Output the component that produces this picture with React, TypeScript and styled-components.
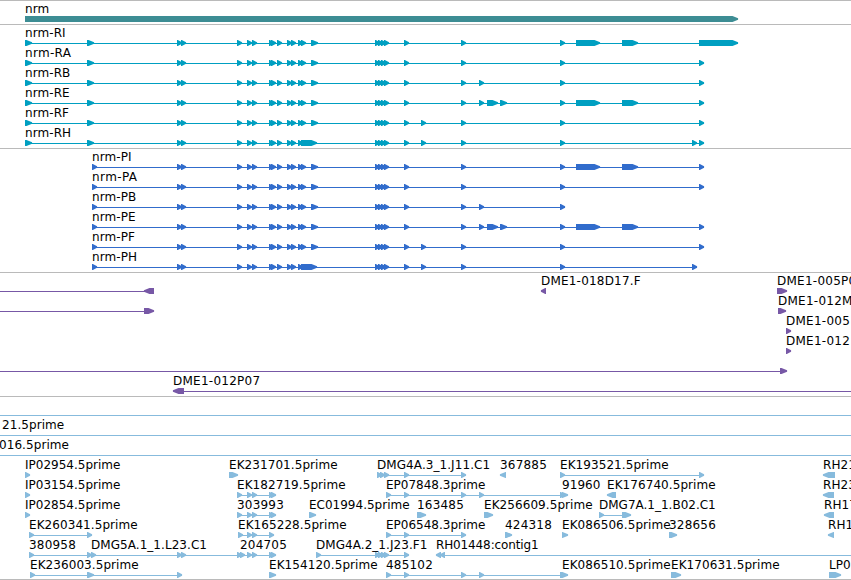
import styled, { createGlobalStyle } from 'styled-components';

type Span = [number, number];

interface Feature {
  label?: string;
  x?: number;
  spacing?: number;
  spans?: Span[];
  line?: Span;
  reverse?: boolean;
}

interface TrackData {
  color: string;
  lanes: Feature[][];
}

const HEAD = 5;

// most exons are only as wide as their arrow head
const small = (...starts: number[]): Span[] => starts.map((s) => [s, s + HEAD]);

const common: Span[] = [
  ...small(177, 181, 237, 247, 252, 269, 271, 277, 287, 291, 298),
  ...small(375, 378, 381, 384, 404, 461, 560),
];
const standard: Span[] = [...common, ...small(301), [311, 318]];
const fused: Span[] = [...common, [301, 317], ...small(421)];
const tail: Span[] = [[576, 600], [622, 638]];
const alternate: Span[] = [...small(479), [487, 498], [500, 507]];

const utr: Span[] = [[25, 32], [87, 94]];
const cds: Span[] = small(92);

const transcripts: Feature[][] = [
  [{ label: 'nrm-RI', x: 25, spans: [...utr, ...standard, ...tail, [699, 738]] }],
  [{ label: 'nrm-RA', x: 25, spacing: 0.3, spans: [...utr, ...standard, ...small(699)] }],
  [{ label: 'nrm-RB', x: 25, spans: [...utr, ...standard, ...small(479, 699)] }],
  [{ label: 'nrm-RE', x: 25, spans: [...utr, ...standard, ...alternate, ...tail, ...small(699)] }],
  [{ label: 'nrm-RF', x: 25, spans: [...utr, ...standard, ...small(421, 699)] }],
  [{ label: 'nrm-RH', x: 25, spans: [...utr, ...fused, ...small(692, 699)] }],
];

const proteins: Feature[][] = [
  [{ label: 'nrm-PI', x: 92, spans: [...cds, ...standard, ...tail, ...small(699)] }],
  [{ label: 'nrm-PA', x: 92, spacing: 0.4, spans: [...cds, ...standard, ...small(699)] }],
  [{ label: 'nrm-PB', x: 92, spans: [...cds, ...standard, ...small(479)] }],
  [{ label: 'nrm-PE', x: 92, spans: [...cds, ...standard, ...alternate, ...tail, ...small(699)] }],
  [{ label: 'nrm-PF', x: 92, spans: [...cds, ...standard, ...small(421, 699)] }],
  [{ label: 'nrm-PH', x: 92, spans: [...cds, ...fused, ...small(692)] }],
];

const clones: Feature[][] = [
  [
    { spans: [[144, 154]], line: [0, 150], reverse: true },
    { label: 'DME1-018D17.F', x: 541, spacing: 0.2, spans: [[541, 546]], reverse: true },
    { label: 'DME1-005P0', x: 777, spacing: 0.25, spans: [[777, 787]] },
  ],
  [
    { spans: [[144, 154]], line: [0, 150] },
    { label: 'DME1-012M', x: 778, spacing: 0.25, spans: [[778, 786]] },
  ],
  [{ label: 'DME1-005', x: 786, spacing: 0.25, spans: [[786, 791]] }],
  [{ label: 'DME1-012', x: 786, spacing: 0.25, spans: [[786, 791]] }],
  [{ spans: [[780, 787]], line: [0, 785] }],
  [{ label: 'DME1-012P07', x: 173, spacing: 0.25, spans: [[173, 184]], line: [180, 851], reverse: true }],
];

const ests: Feature[][] = [
  [{ line: [0, 851] }],
  [{ label: '21.5prime', x: 2, line: [0, 851] }],
  [{ label: '016.5prime', x: -1, line: [0, 851] }],
  [
    { label: 'IP02954.5prime', x: 25, spacing: 0, spans: small(25) },
    { label: 'EK231701.5prime', x: 229, spans: [[229, 238]] },
    { label: 'DMG4A.3_1.J11.C1', x: 377, spans: small(377, 380, 384, 404, 461) },
    { label: '367885', x: 500, spacing: 0.2, spans: [[500, 506]], reverse: true },
    { label: 'EK193521.5prime', x: 560, spans: small(560, 699) },
    { label: 'RH21', x: 823, spans: [[823, 835]], reverse: true },
  ],
  [
    { label: 'IP03154.5prime', x: 25, spacing: 0, spans: small(25) },
    { label: 'EK182719.5prime', x: 237, spans: small(237, 247, 252, 269, 271) },
    { label: 'EP07848.3prime', x: 386, spacing: 0, spans: small(386, 404, 461, 479, 560) },
    { label: '91960', x: 562, spans: [[562, 568]] },
    { label: 'EK176740.5prime', x: 607, spans: [[607, 616]], reverse: true },
    { label: 'RH23', x: 823, spans: [[823, 834]], reverse: true },
  ],
  [
    { label: 'IP02854.5prime', x: 25, spacing: 0, spans: small(25) },
    { label: '303993', x: 237, spacing: 0.2, spans: small(237, 247, 252, 269, 271) },
    { label: 'EC01994.5prime', x: 309, spacing: 0, spans: [[309, 316]] },
    { label: '163485', x: 417, spacing: 0.2, spans: [[417, 426]] },
    { label: 'EK256609.5prime', x: 484, spans: [[484, 493]] },
    { label: 'DMG7A.1_1.B02.C1', x: 599, spacing: 0, spans: [[599, 604], [622, 631]] },
    { label: 'RH17', x: 824, spans: [[824, 834]], reverse: true },
  ],
  [
    { label: 'EK260341.5prime', x: 29, spans: small(29, 87) },
    { label: 'EK165228.5prime', x: 238, spans: small(238, 247, 252, 269) },
    { label: 'EP06548.3prime', x: 386, spacing: 0, spans: small(386, 404, 461) },
    { label: '424318', x: 505, spacing: 0.2, spans: [[505, 512]] },
    { label: 'EK086506.5prime', x: 562, spans: [[562, 568]] },
    { label: '328656', x: 669, spacing: 0.2, spans: [[669, 677]] },
    { label: 'RH1', x: 828, spans: [[828, 834]], reverse: true },
  ],
  [
    { label: '380958', x: 29, spacing: 0.2, spans: small(29, 87) },
    { label: 'DMG5A.1_1.L23.C1', x: 91, spacing: 0.05, spans: small(91, 177, 181, 237) },
    { label: '204705', x: 240, spacing: 0.2, spans: small(240, 247, 252, 269, 271) },
    { label: 'DMG4A.2_1.J23.F1', x: 316, spacing: 0.05, spans: small(316, 375, 378, 381, 384, 404) },
    { label: 'RH01448:contig1', x: 436, spacing: -0.13, spans: small(436, 440), line: [440, 851], reverse: true },
  ],
  [
    { label: 'EK236003.5prime', x: 30, spans: [[30, 35], [87, 94], [177, 182]] },
    { label: 'EK154120.5prime', x: 269, spans: [[269, 276]] },
    { label: '485102', x: 386, spacing: 0.2, spans: [...small(386, 404, 461, 479), [560, 568]] },
    { label: 'EK086510.5prime', x: 562 },
    { label: 'EK170631.5prime', x: 671, spans: [[671, 681]] },
    { label: 'LP0', x: 829, spans: [[829, 841]] },
  ],
];

const tracks: TrackData[] = [
  { color: '#3d8d94', lanes: [[{ label: 'nrm', x: 25, spans: [[25, 738]] }]] },
  { color: '#009fc1', lanes: transcripts },
  { color: '#316ccc', lanes: proteins },
  { color: '#7758a6', lanes: clones },
  { color: '#87bbdd', lanes: ests },
];

// the head keeps a slightly blunt tip so that narrow exons stay readable
const arrow = ([start, end]: Span, reverse?: boolean) => {
  const head = end - start > HEAD ? HEAD + 0.5 : HEAD - 0.8;
  return reverse
    ? `M${end} 0H${start + head}L${start - 0.1} 2.3V3.7L${start + head} 6H${end}Z`
    : `M${start} 0H${end - head}L${end + 0.1} 2.3V3.7L${end - head} 6H${start}Z`;
};

const Glyph = ({ spans = [], line, reverse }: Feature) => {
  const [from, to] = line || [
    Math.min(...spans.map((s) => s[0])),
    Math.max(...spans.map((s) => s[1])),
  ];
  const connected = line || spans.length > 1;

  return (
    <g>
      {connected && <rect x={from} y={3} width={to - from} height={1} />}
      {spans.map((span, i) => (
        <path key={i} d={arrow(span, reverse)} />
      ))}
    </g>
  );
};

const App = () => (
  <>
    <GlobalStyle />
    <Browser>
      {tracks.map((track, i) => (
        <Track key={i}>
          {track.lanes.map((lane, j) => (
            <Lane key={j}>
              <Labels>
                {lane.map(
                  (f) =>
                    f.label && (
                      <Label key={f.label} $x={f.x || 0} $spacing={f.spacing}>
                        {f.label}
                      </Label>
                    )
                )}
              </Labels>
              <Glyphs $color={track.color}>
                {lane.map((f, k) => (
                  <Glyph key={k} {...f} />
                ))}
              </Glyphs>
            </Lane>
          ))}
        </Track>
      ))}
    </Browser>
  </>
);

const GlobalStyle = createGlobalStyle`
  body {
    margin: 0;
    background: #fff;
  }
`;

const Browser = styled.main`
  display: flex;
  flex-direction: column;
  width: 851px;
  height: 580px;
  box-sizing: border-box;
  overflow: hidden;
  border-bottom: 1px solid #bababa;
  background: #fff;
`;

const Track = styled.section`
  display: flex;
  flex-direction: column;
  flex-shrink: 0;
  padding: 1px 0 2px;
  border-top: 1px solid #bababa;

  &:last-child {
    padding-bottom: 1px;
  }
`;

const Lane = styled.div`
  display: flex;
  flex-direction: column;
  height: 20px;
`;

const Labels = styled.div`
  position: relative;
  height: 14px;
`;

/* labels sit at the map coordinate of their feature */
const Label = styled.span<{ $x: number; $spacing?: number }>`
  position: absolute;
  top: 0;
  left: ${({ $x }) => $x}px;
  color: #000;
  font: 12px/14px 'DejaVu Sans', sans-serif;
  letter-spacing: ${({ $spacing }) => $spacing ?? 0.07}px;
  white-space: nowrap;
`;

const Glyphs = styled.svg<{ $color: string }>`
  display: block;
  width: 100%;
  height: 6px;
  fill: ${({ $color }) => $color};
`;

export default App;
